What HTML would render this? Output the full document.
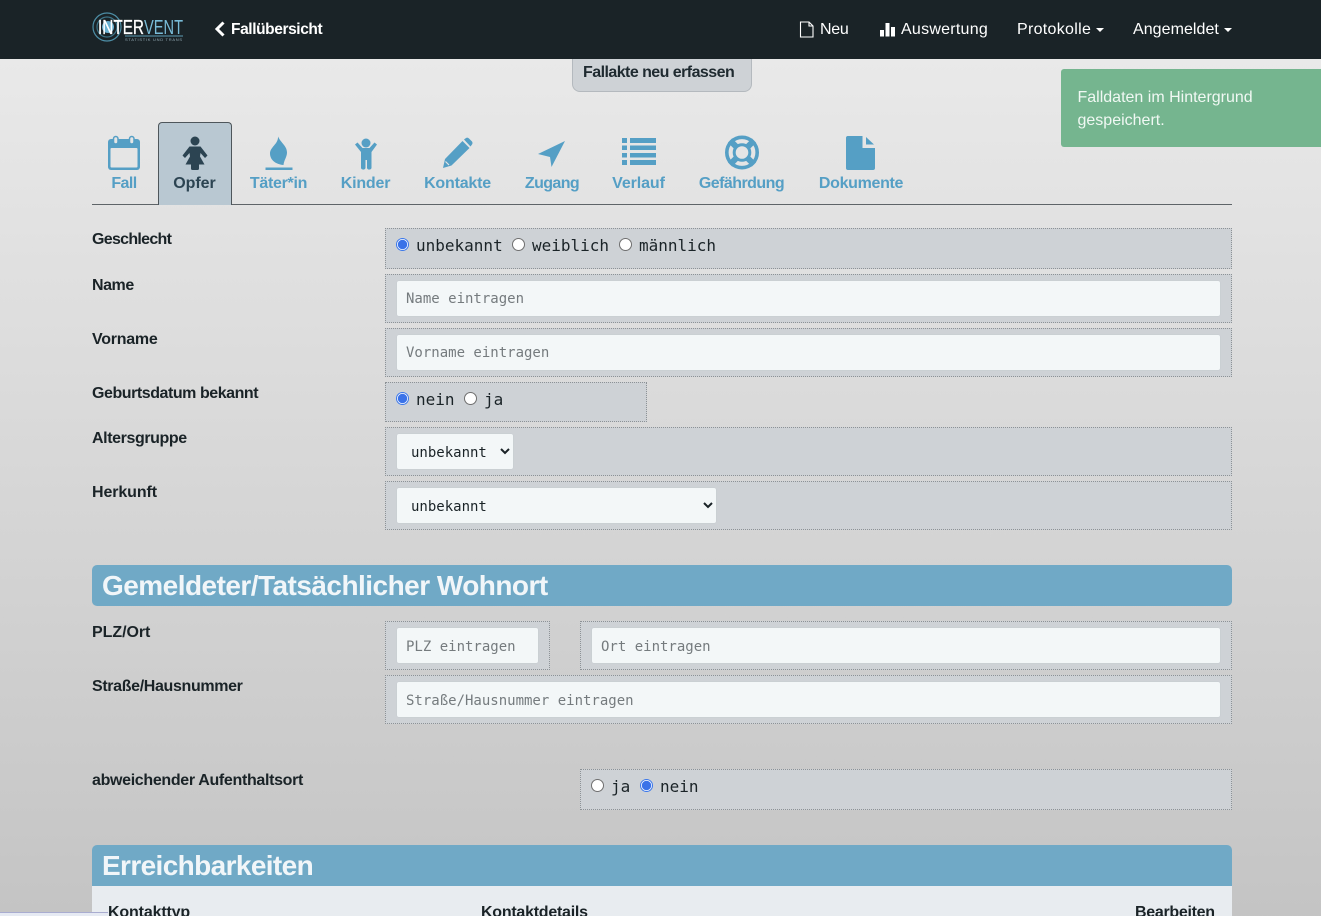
<!DOCTYPE html>
<html lang="de"><head><meta charset="utf-8"><title>Fallakte neu erfassen</title>
<style>
html,body{margin:0;padding:0;width:1321px;height:916px;overflow:hidden}
body{position:relative;background:linear-gradient(#e9e9e9 59px,#c4c4c4 916px);font-family:"Liberation Sans",sans-serif;color:#1a2327}
.a{position:absolute;white-space:nowrap}
nav{position:absolute;left:0;top:0;width:1321px;height:59px;background:#1a2327}
.n{position:absolute;top:20px;line-height:20px;font-size:16px;color:#fff;white-space:nowrap}
.t{position:absolute;top:175px;line-height:18px;font-size:16px;font-weight:bold;color:#559fc5;white-space:nowrap;letter-spacing:-.3px;transform:translateX(-50%)}
.l{position:absolute;line-height:20px;font-size:16px;font-weight:bold;color:#1a2327;white-space:nowrap;letter-spacing:-.4px;left:92px}
.b{position:absolute;box-sizing:border-box;background:#ced2d6;border:1px dotted #8d9296}
input[type=text]{position:absolute;box-sizing:border-box;height:35px;border:0;border-radius:2px;background:#f3f7f8;font:14px "DejaVu Sans Mono",monospace;padding:0 9px;color:#1a2327;box-shadow:0 0 1px #b6c0c6;outline:0}
input.p{padding-top:2px}
input::placeholder{color:#757b7e;opacity:1}
input[type=radio]{position:absolute;appearance:none;-webkit-appearance:none;box-sizing:border-box;width:13px;height:13px;margin:0;border-radius:50%;border:1px solid #6f6f6f;background:#fff}
input[type=radio]:checked{border:1px solid #3c78ea;background:radial-gradient(circle,#3a72e8 0,#3a72e8 4.400px,#fff 5px)}
.m{position:absolute;font:16px/20px "DejaVu Sans Mono",monospace;color:#1a2327;white-space:nowrap}
select{position:absolute;box-sizing:border-box;height:35px;border:0;border-radius:2px;background:#f3f7f8;font:14px "DejaVu Sans Mono",monospace;color:#1a2327;padding:2px 0 0 10px;box-shadow:0 0 1px #b6c0c6;outline:0}
.h{position:absolute;left:92px;width:1140px;height:41px;background:#70a9c6;color:#f1f6f9;font-size:28px;font-weight:bold;line-height:41px;text-indent:10px;letter-spacing:-.53px;white-space:nowrap}
</style></head><body>
<nav>
<svg class="a" style="left:90px;top:8px" width="100" height="40" viewBox="90 8 100 40">
<circle cx="107" cy="27" r="14" fill="none" stroke="#4d8ea6" stroke-width="1.2"/>
<circle cx="107" cy="27" r="10" fill="none" stroke="#3d7488" stroke-width="1.2"/>
<circle cx="108" cy="27" r="6" fill="#6ab0d0"/>
<rect x="125" y="35.500" width="58" height="1" fill="#5e9cb4"/>
<text x="98" y="34" font-family="Liberation Sans" font-size="20" fill="#fff" stroke="#fff" stroke-width=".3" textLength="46" lengthAdjust="spacingAndGlyphs">INTER</text>
<text x="144" y="34" font-family="Liberation Sans" font-size="20" fill="#79bcd8" textLength="39" lengthAdjust="spacingAndGlyphs">VENT</text>
<text x="125" y="41" font-family="Liberation Sans" font-size="4" fill="#93a9b3" textLength="57" lengthAdjust="spacing">STATISTIK UND TRANS</text>
</svg>
<svg class="a" style="left:214px;top:21px" width="12" height="16" viewBox="0 0 12 16"><path d="M9.500 1.500 3 8l6.500 6.500" fill="none" stroke="#fff" stroke-width="3"/></svg>
<div class="n" style="left:231px;font-weight:bold;letter-spacing:-.4px;font-size:15.500px">Fallübersicht</div>
<svg class="a" style="left:799px;top:21px" width="16" height="17" viewBox="0 0 16 17"><path d="M1.500 1h8.500l4 4v11h-12.500zM10 1v4h4" fill="none" stroke="#fff" stroke-width="1.100"/></svg>
<div class="n" style="left:820px;letter-spacing:-.3px">Neu</div>
<svg class="a" style="left:880px;top:22px" width="16" height="15" viewBox="0 0 16 15"><rect x="0" y="8" width="4" height="6.500" fill="#fff"/><rect x="5.500" y="1" width="4" height="13.500" fill="#fff"/><rect x="11" y="5" width="4" height="9.500" fill="#fff"/></svg>
<div class="n" style="left:901px;letter-spacing:.25px">Auswertung</div>
<div class="n" style="left:1017px;letter-spacing:.3px">Protokolle</div>
<svg class="a" style="left:1096px;top:28px" width="8" height="4" viewBox="0 0 8 4"><path d="M0 0h8L4 4z" fill="#fff"/></svg>
<div class="n" style="left:1133px;letter-spacing:.05px">Angemeldet</div>
<svg class="a" style="left:1224px;top:28px" width="8" height="4" viewBox="0 0 8 4"><path d="M0 0h8L4 4z" fill="#fff"/></svg>
</nav>

<div class="a" style="left:572px;top:59px;width:180px;height:33px;box-sizing:border-box;background:#ced2d6;border:1px solid #b4b9be;border-top:0;border-radius:0 0 8px 8px;font-size:16px;font-weight:bold;line-height:28px;padding-left:10px;letter-spacing:-.55px;color:#1f2a30">Fallakte neu erfassen</div>

<div class="a" style="left:1061px;top:69px;width:260px;height:78px;background:#75b58f;border-radius:3px 0 0 3px;color:#f0f8f3;font-size:16px;line-height:23px;padding:17px 0 0 16.500px;box-sizing:border-box;white-space:normal">Falldaten im Hintergrund<br>gespeichert.</div>

<div class="a" style="left:92px;top:204px;width:1140px;height:1px;background:#5e6468"></div>
<div class="a" style="left:158px;top:122px;width:74px;height:83px;box-sizing:border-box;background:#b9c8d2;border:1px solid #4e565b;border-bottom:0;border-radius:4px 4px 0 0"></div>

<svg class="a" style="left:0;top:0" width="1321" height="210" viewBox="0 0 1321 210">
<g fill="#559fc5">
<rect x="108" y="139" width="32" height="31" rx="3"/><rect x="110.500" y="148" width="27" height="19.500" rx="1" fill="#e5e5e5"/>
<rect x="113.500" y="136.500" width="4.500" height="7.500" rx="2.200" fill="#e5e5e5" stroke="#559fc5" stroke-width="1.500"/>
<rect x="129.500" y="136.500" width="4.500" height="7.500" rx="2.200" fill="#e5e5e5" stroke="#559fc5" stroke-width="1.500"/>
<path d="M278 136.500C281 143 287 146 287 152.500C287 157 284 160 283.500 165C276 164.500 270 160 270 153.500C270 147 278.500 144 278 136.500z"/>
<rect x="265.500" y="167.500" width="27" height="2.500"/>
<circle cx="366" cy="143" r="4.500"/>
<path d="M355 144.500l2.500-2 5 5.500h7l5-5.500 2.500 2-5.500 7.500v16a2 2 0 0 1-2 1.500 2 2 0 0 1-2.500-1.500v-8h-1.500v8a2 2 0 0 1-2.500 1.500 2 2 0 0 1-2-1.500v-16z"/>
<path d="M443 168l2-9 17.500-18 7 7-18 17.500z"/><path d="M464 139.500l2-1.500q1.500-1 3 .5l3 3q1 1.500 0 3l-1.500 2z"/>
<path d="M445.500 161.500l3.500 3.500" stroke="#e5e5e5" stroke-width="1.200"/>
<path d="M565 141l-27 13 12 3 1.500 10z"/>
<path d="M622 138h5v5h-5zM622 145.500h5v4.500h-5zM622 153h5v4.500h-5zM622 160h5v5h-5zM630 138h26v5h-26zM630 145.500h26v4.500h-26zM630 153h26v4.500h-26zM630 160h26v5h-26z"/>
<path d="M847.500 136H862.500V148H875V168a2 2 0 0 1-2 2H848a2 2 0 0 1-2-2V138a2 2 0 0 1 1.500-2z"/><path d="M866 137l8 7.500h-8z"/>
</g>
<g fill="none" stroke="#559fc5">
<circle cx="742" cy="152.500" r="15.200" stroke-width="3.600"/>
<circle cx="742" cy="152.500" r="7.800" stroke-width="3"/>
<path d="M747.500 147l6.500-6.500M736.500 147l-6.500-6.500M747.500 158l6.500 6.500M736.500 158l-6.500 6.500" stroke-width="6"/>
</g>
<g fill="#2c4452">
<circle cx="195" cy="141" r="4.500"/>
<path d="M189.500 146.500H200.500L207.500 155.500L205 158L200.500 153L200 156.500L204.500 164.500H199V168.500A1.500 1.500 0 0 1 197.500 170H192.500A1.500 1.500 0 0 1 191 168.500V164.500H185.500L190 156.500L189.500 153L185 158L182.500 155.500Z"/>
</g>
</svg>
<div class="t" style="left:124px;letter-spacing:-.55px">Fall</div>
<div class="t" style="left:194.500px;color:#2c4452;letter-spacing:-.05px">Opfer</div>
<div class="t" style="left:278.500px;letter-spacing:-.3px">Täter*in</div>
<div class="t" style="left:365.500px;letter-spacing:-.2px">Kinder</div>
<div class="t" style="left:457.500px;letter-spacing:-.2px">Kontakte</div>
<div class="t" style="left:552px;letter-spacing:-.6px">Zugang</div>
<div class="t" style="left:638.500px;letter-spacing:-.1px">Verlauf</div>
<div class="t" style="left:741.500px;letter-spacing:-.55px">Gefährdung</div>
<div class="t" style="left:861px;letter-spacing:-.33px">Dokumente</div>

<div class="l" style="top:230px;letter-spacing:-.7px">Geschlecht</div>
<div class="b" style="left:385px;top:228px;width:847px;height:41px"></div>
<input type="radio" name="g" checked style="left:396px;top:238px"><span class="m" style="left:416px;top:236px">unbekannt</span>
<input type="radio" name="g" style="left:512px;top:238px"><span class="m" style="left:532px;top:236px">weiblich</span>
<input type="radio" name="g" style="left:619px;top:238px"><span class="m" style="left:639px;top:236px">männlich</span>

<div class="l" style="top:276px;letter-spacing:-.45px">Name</div>
<div class="b" style="left:385px;top:274px;width:847px;height:49px"></div>
<input type="text" placeholder="Name eintragen" style="left:397px;top:281px;width:823px">

<div class="l" style="top:330px;letter-spacing:-.25px">Vorname</div>
<div class="b" style="left:385px;top:328px;width:847px;height:49px"></div>
<input type="text" placeholder="Vorname eintragen" style="left:397px;top:335px;width:823px">

<div class="l" style="top:384px;letter-spacing:-.45px">Geburtsdatum bekannt</div>
<div class="b" style="left:385px;top:382px;width:262px;height:40px"></div>
<input type="radio" name="d" checked style="left:396px;top:392px"><span class="m" style="left:416px;top:390px">nein</span>
<input type="radio" name="d" style="left:464px;top:392px"><span class="m" style="left:484px;top:390px">ja</span>

<div class="l" style="top:429px;letter-spacing:-.4px">Altersgruppe</div>
<div class="b" style="left:385px;top:427px;width:847px;height:49px"></div>
<select style="left:397px;top:434px;width:116px"><option>unbekannt</option></select>

<div class="l" style="top:483px;letter-spacing:-.1px">Herkunft</div>
<div class="b" style="left:385px;top:481px;width:847px;height:49px"></div>
<select style="left:397px;top:488px;width:319px"><option>unbekannt</option></select>

<div class="h" style="top:565px;border-radius:5px">Gemeldeter/Tatsächlicher Wohnort</div>

<div class="l" style="top:623px;letter-spacing:-.05px">PLZ/Ort</div>
<div class="b" style="left:385px;top:621px;width:165px;height:49px"></div>
<input class="p" type="text" placeholder="PLZ eintragen" style="left:397px;top:628px;width:141px">
<div class="b" style="left:580px;top:621px;width:652px;height:49px"></div>
<input class="p" type="text" placeholder="Ort eintragen" style="left:592px;top:628px;width:628px">

<div class="l" style="top:677px;letter-spacing:-.35px">Straße/Hausnummer</div>
<div class="b" style="left:385px;top:675px;width:847px;height:49px"></div>
<input class="p" type="text" placeholder="Straße/Hausnummer eintragen" style="left:397px;top:682px;width:823px">

<div class="l" style="top:771px;letter-spacing:-.33px">abweichender Aufenthaltsort</div>
<div class="b" style="left:580px;top:769px;width:652px;height:41px"></div>
<input type="radio" name="w" style="left:591px;top:779px"><span class="m" style="left:611px;top:777px">ja</span>
<input type="radio" name="w" checked style="left:640px;top:779px"><span class="m" style="left:660px;top:777px">nein</span>

<div class="h" style="top:845px;border-radius:5px 5px 0 0;letter-spacing:-.62px">Erreichbarkeiten</div>
<div class="a" style="left:92px;top:886px;width:1140px;height:30px;background:#e8ecf0"></div>
<div class="l" style="left:108px;top:903px;letter-spacing:-.15px">Kontakttyp</div>
<div class="l" style="left:481px;top:903px;letter-spacing:-.25px">Kontaktdetails</div>
<div class="l" style="left:1135px;top:903px;letter-spacing:-.3px">Bearbeiten</div>
<div class="a" style="left:0;top:912px;width:108px;height:4px;box-sizing:border-box;background:#e6eaf3;border-top:1px solid #a9acd0"></div>
</body></html>
